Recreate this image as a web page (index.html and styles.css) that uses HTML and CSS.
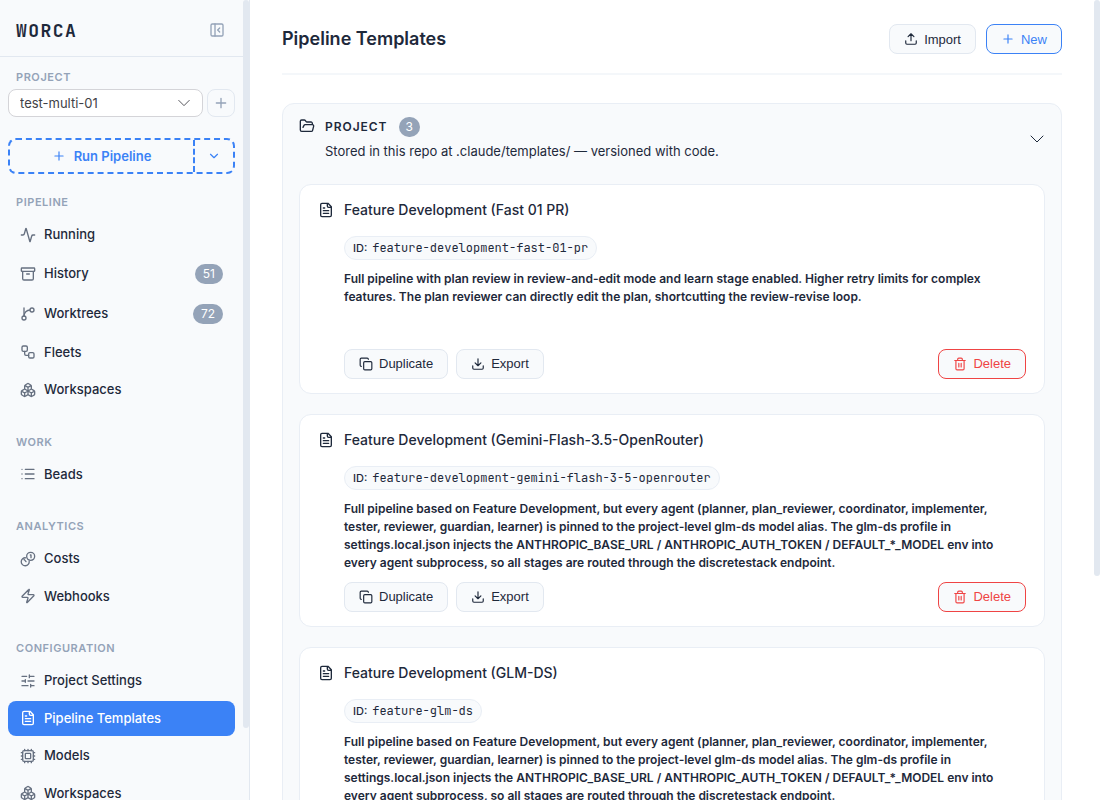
FILE: index.html
```html
<!DOCTYPE html>
<html lang="en">
<head>
    <meta charset="UTF-8">
    <meta name="viewport" content="width=device-width, initial-scale=1.0">
    <title>Worca - Pipeline Templates</title>
    <link rel="stylesheet" href="styles.css">
</head>
<body>

    <!-- Icon sprite -->
    <svg class="sprite" aria-hidden="true">
        <symbol id="i-panel" viewBox="0 0 24 24"><rect x="3" y="3" width="18" height="18" rx="2"/><path d="M9 3v18M16 15l-3-3 3-3"/></symbol>
        <symbol id="i-plus" viewBox="0 0 24 24"><path d="M5 12h14M12 5v14"/></symbol>
        <symbol id="i-chevron" viewBox="0 0 24 24"><path d="M6 9l6 6 6-6"/></symbol>
        <symbol id="i-chevron-wide" viewBox="0 0 16 16"><path d="M2 5l6 6 6-6"/></symbol>
        <symbol id="i-activity" viewBox="0 0 24 24"><path d="M22 12h-2.48a2 2 0 0 0-1.93 1.46l-2.35 8.36a.25.25 0 0 1-.48 0L9.24 2.18a.25.25 0 0 0-.48 0l-2.35 8.36A2 2 0 0 1 4.49 12H2"/></symbol>
        <symbol id="i-archive" viewBox="0 0 24 24"><rect x="2" y="3" width="20" height="5" rx="1"/><path d="M4 8v11a2 2 0 0 0 2 2h12a2 2 0 0 0 2-2V8M10 12h4"/></symbol>
        <symbol id="i-branch" viewBox="0 0 24 24"><path d="M6 3v12"/><circle cx="18" cy="6" r="3"/><circle cx="6" cy="18" r="3"/><path d="M15 6a9 9 0 0 0-9 9"/></symbol>
        <symbol id="i-workflow" viewBox="0 0 24 24"><rect x="3" y="3" width="8" height="8" rx="2"/><path d="M7 11v4a2 2 0 0 0 2 2h4"/><rect x="13" y="13" width="8" height="8" rx="2"/></symbol>
        <symbol id="i-boxes" viewBox="0 0 24 24"><path d="M2.97 12.92A2 2 0 0 0 2 14.63v3.24a2 2 0 0 0 .97 1.71l3 1.8a2 2 0 0 0 2.06 0L12 19v-5.5l-5-3-4.03 2.42ZM7 16.5l-4.74-2.85M7 16.5l5-3M7 16.5v5.17M12 13.5V19l3.97 2.38a2 2 0 0 0 2.06 0l3-1.8a2 2 0 0 0 .97-1.71v-3.24a2 2 0 0 0-.97-1.71L17 10.5l-5 3ZM17 16.5l-5-3M17 16.5l4.74-2.85M17 16.5v5.17M7.97 4.42A2 2 0 0 0 7 6.13v4.37l5 3 5-3V6.13a2 2 0 0 0-.97-1.71l-3-1.8a2 2 0 0 0-2.06 0l-3 1.8ZM12 8L7.26 5.15M12 8l4.74-2.85M12 13.5V8"/></symbol>
        <symbol id="i-list" viewBox="0 0 24 24"><path d="M3 5h.01M3 12h.01M3 19h.01M8 5h13M8 12h13M8 19h13"/></symbol>
        <symbol id="i-coins" viewBox="0 0 24 24"><circle cx="16" cy="8" r="6"/><path d="M8.5 10.2A6 6 0 1 0 13.8 15.5M15.5 6h1v4M6 13h.5l2.5 3"/></symbol>
        <symbol id="i-zap" viewBox="0 0 24 24"><path d="M4 14a1 1 0 0 1-.78-1.63l9.9-10.2a.5.5 0 0 1 .86.46l-1.92 6.02A1 1 0 0 0 13 10h7a1 1 0 0 1 .78 1.63l-9.9 10.2a.5.5 0 0 1-.86-.46l1.92-6.02A1 1 0 0 0 11 14z"/></symbol>
        <symbol id="i-sliders" viewBox="0 0 24 24"><path d="M10 5H3M12 19H3M14 3v4M16 17v4M21 12h-9M21 19h-5M21 5h-7M8 10v4M8 12H3"/></symbol>
        <symbol id="i-file" viewBox="0 0 24 24"><path d="M15 2H6a2 2 0 0 0-2 2v16a2 2 0 0 0 2 2h12a2 2 0 0 0 2-2V7ZM14 2v4a2 2 0 0 0 2 2h4M10 9H8M16 13H8M16 17H8"/></symbol>
        <symbol id="i-cpu" viewBox="0 0 24 24"><rect x="4" y="4" width="16" height="16" rx="2"/><rect x="8" y="8" width="8" height="8" rx="1"/><path d="M12 20v2M12 2v2M17 20v2M17 2v2M7 20v2M7 2v2M2 12h2M2 17h2M2 7h2M20 12h2M20 17h2M20 7h2"/></symbol>
        <symbol id="i-folder" viewBox="0 0 24 24"><path d="M6 14l1.5-2.9A2 2 0 0 1 9.24 10H20a2 2 0 0 1 1.94 2.5l-1.54 6a2 2 0 0 1-1.95 1.5H4a2 2 0 0 1-2-2V5a2 2 0 0 1 2-2h3.9a2 2 0 0 1 1.69.9l.81 1.2a2 2 0 0 0 1.67.9H18a2 2 0 0 1 2 2v2"/></symbol>
        <symbol id="i-upload" viewBox="0 0 24 24"><path d="M12 3v12M17 8l-5-5-5 5M21 15v4a2 2 0 0 1-2 2H5a2 2 0 0 1-2-2v-4"/></symbol>
        <symbol id="i-download" viewBox="0 0 24 24"><path d="M12 15V3M7 10l5 5 5-5M21 15v4a2 2 0 0 1-2 2H5a2 2 0 0 1-2-2v-4"/></symbol>
        <symbol id="i-copy" viewBox="0 0 24 24"><rect x="8" y="8" width="14" height="14" rx="2"/><path d="M4 16c-1.1 0-2-.9-2-2V4c0-1.1.9-2 2-2h10c1.1 0 2 .9 2 2"/></symbol>
        <symbol id="i-trash" viewBox="0 0 24 24"><path d="M10 11v6M14 11v6M19 6v14a2 2 0 0 1-2 2H7a2 2 0 0 1-2-2V6M3 6h18M8 6V4a2 2 0 0 1 2-2h4a2 2 0 0 1 2 2v2"/></symbol>
    </svg>

    <div class="app">
        <aside class="sidebar">
            <div class="sidebar-scroll">
                <div class="sidebar-header">
                    <span class="logo">WORCA</span>
                    <button class="collapse-btn" aria-label="Collapse sidebar"><svg class="icon"><use href="#i-panel"/></svg></button>
                </div>

                <div class="project-picker">
                    <label class="section-label" for="project">PROJECT</label>
                    <div class="project-row">
                        <div class="select-wrap">
                            <select id="project">
                                <option>test-multi-01</option>
                            </select>
                            <svg class="icon select-arrow"><use href="#i-chevron-wide"/></svg>
                        </div>
                        <button class="add-btn" aria-label="Add project"><svg class="icon"><use href="#i-plus"/></svg></button>
                    </div>
                </div>

                <div class="run-group">
                    <button class="run-btn"><svg class="icon"><use href="#i-plus"/></svg>Run Pipeline</button>
                    <button class="run-more" aria-label="More run options"><svg class="icon"><use href="#i-chevron"/></svg></button>
                </div>

                <nav>
                    <div class="nav-section">
                        <div class="section-label">PIPELINE</div>
                        <a class="nav-item" href="#running"><svg class="icon"><use href="#i-activity"/></svg>Running</a>
                        <a class="nav-item" href="#history"><svg class="icon"><use href="#i-archive"/></svg>History<span class="badge">51</span></a>
                        <a class="nav-item" href="#worktrees"><svg class="icon"><use href="#i-branch"/></svg>Worktrees<span class="badge">72</span></a>
                        <a class="nav-item" href="#fleets"><svg class="icon"><use href="#i-workflow"/></svg>Fleets</a>
                        <a class="nav-item" href="#workspaces"><svg class="icon"><use href="#i-boxes"/></svg>Workspaces</a>
                    </div>
                    <div class="nav-section">
                        <div class="section-label">WORK</div>
                        <a class="nav-item" href="#beads"><svg class="icon"><use href="#i-list"/></svg>Beads</a>
                    </div>
                    <div class="nav-section">
                        <div class="section-label">ANALYTICS</div>
                        <a class="nav-item" href="#costs"><svg class="icon"><use href="#i-coins"/></svg>Costs</a>
                        <a class="nav-item" href="#webhooks"><svg class="icon"><use href="#i-zap"/></svg>Webhooks</a>
                    </div>
                    <div class="nav-section">
                        <div class="section-label">CONFIGURATION</div>
                        <a class="nav-item" href="#settings"><svg class="icon"><use href="#i-sliders"/></svg>Project Settings</a>
                        <a class="nav-item active" href="#templates"><svg class="icon"><use href="#i-file"/></svg>Pipeline Templates</a>
                        <a class="nav-item" href="#models"><svg class="icon"><use href="#i-cpu"/></svg>Models</a>
                        <a class="nav-item" href="#config-workspaces"><svg class="icon"><use href="#i-boxes"/></svg>Workspaces</a>
                    </div>
                </nav>
            </div>
            <div class="scroll-track"><div class="scroll-thumb sidebar-thumb"></div></div>
        </aside>

        <main class="content">
            <div class="content-scroll">
                <header class="page-header">
                    <h1>Pipeline Templates</h1>
                    <div class="header-actions">
                        <button class="btn"><svg class="icon"><use href="#i-upload"/></svg>Import</button>
                        <button class="btn btn-primary"><svg class="icon"><use href="#i-plus"/></svg>New</button>
                    </div>
                </header>

                <section class="group">
                    <div class="group-header">
                        <svg class="icon"><use href="#i-folder"/></svg>
                        <div class="group-text">
                            <div class="group-title"><h2>PROJECT</h2><span class="badge">3</span></div>
                            <p>Stored in this repo at .claude/templates/ — versioned with code.</p>
                        </div>
                        <button class="toggle-btn" aria-label="Collapse group"><svg class="icon"><use href="#i-chevron-wide"/></svg></button>
                    </div>

                    <article class="card">
                        <svg class="icon"><use href="#i-file"/></svg>
                        <div class="card-body">
                            <h3>Feature Development (Fast 01 PR)</h3>
                            <div class="id-pill">ID: <code>feature-development-fast-01-pr</code></div>
                            <p>Full pipeline with plan review in review-and-edit mode and learn stage enabled. Higher retry limits for complex features. The plan reviewer can directly edit the plan, shortcutting the review-revise loop.</p>
                            <div class="card-actions">
                                <button class="btn"><svg class="icon"><use href="#i-copy"/></svg>Duplicate</button>
                                <button class="btn"><svg class="icon"><use href="#i-download"/></svg>Export</button>
                                <button class="btn btn-danger"><svg class="icon"><use href="#i-trash"/></svg>Delete</button>
                            </div>
                        </div>
                    </article>

                    <article class="card">
                        <svg class="icon"><use href="#i-file"/></svg>
                        <div class="card-body">
                            <h3>Feature Development (Gemini-Flash-3.5-OpenRouter)</h3>
                            <div class="id-pill">ID: <code>feature-development-gemini-flash-3-5-openrouter</code></div>
                            <p>Full pipeline based on Feature Development, but every agent (planner, plan_reviewer, coordinator, implementer, tester, reviewer, guardian, learner) is pinned to the project-level glm-ds model alias. The glm-ds profile in settings.local.json injects the ANTHROPIC_BASE_URL / ANTHROPIC_AUTH_TOKEN / DEFAULT_*_MODEL env into every agent subprocess, so all stages are routed through the discretestack endpoint.</p>
                            <div class="card-actions">
                                <button class="btn"><svg class="icon"><use href="#i-copy"/></svg>Duplicate</button>
                                <button class="btn"><svg class="icon"><use href="#i-download"/></svg>Export</button>
                                <button class="btn btn-danger"><svg class="icon"><use href="#i-trash"/></svg>Delete</button>
                            </div>
                        </div>
                    </article>

                    <article class="card">
                        <svg class="icon"><use href="#i-file"/></svg>
                        <div class="card-body">
                            <h3>Feature Development (GLM-DS)</h3>
                            <div class="id-pill">ID: <code>feature-glm-ds</code></div>
                            <p>Full pipeline based on Feature Development, but every agent (planner, plan_reviewer, coordinator, implementer, tester, reviewer, guardian, learner) is pinned to the project-level glm-ds model alias. The glm-ds profile in settings.local.json injects the ANTHROPIC_BASE_URL / ANTHROPIC_AUTH_TOKEN / DEFAULT_*_MODEL env into every agent subprocess, so all stages are routed through the discretestack endpoint.</p>
                            <div class="card-actions">
                                <button class="btn"><svg class="icon"><use href="#i-copy"/></svg>Duplicate</button>
                                <button class="btn"><svg class="icon"><use href="#i-download"/></svg>Export</button>
                                <button class="btn btn-danger"><svg class="icon"><use href="#i-trash"/></svg>Delete</button>
                            </div>
                        </div>
                    </article>
                </section>
            </div>
            <div class="scroll-track"><div class="scroll-thumb content-thumb"></div></div>
        </main>
    </div>

</body>
</html>
```

FILE: styles.css
```css
* {
    box-sizing: border-box;
}
body {
    margin: 0;
    font-family: Inter, sans-serif;
    font-size: 13px;
    line-height: 1.5;
    color: #1e293b;
    background-color: #fff;
}
h1, h2, h3, p {
    margin: 0;
}
button {
    padding: 0;
    background: none;
    border: none;
    cursor: pointer;
}
.sprite {
    display: none;
}
.icon {
    width: 16px;
    height: 16px;
    flex-shrink: 0;
    fill: none;
    stroke: currentColor;
    stroke-width: 2;
    stroke-linecap: round;
    stroke-linejoin: round;
}
.badge {
    padding: 0 7px;
    line-height: 20px;
    font-size: 12px;
    font-weight: 400;
    color: #fff;
    text-align: center;
    background-color: #94a3b8;
    border-radius: 10px;
}

.app {
    display: flex;
    height: 100vh;
}

/* Scroll panes with a slim thumb beside them */
.sidebar-scroll,
.content-scroll {
    flex: 1;
    min-width: 0;
    overflow-y: auto;
    scrollbar-width: none;
}
.scroll-track {
    width: 6px;
    flex-shrink: 0;
}
.scroll-thumb {
    background-color: #e2e8f0;
    border-radius: 3px;
}
.sidebar-thumb {
    height: 91%;
}
.content-thumb {
    height: 72%;
}

/* Sidebar */
.sidebar {
    display: flex;
    width: 250px;
    flex-shrink: 0;
    background-color: #f8fafc;
    border-right: 1px solid #e2e8f0;
}
.sidebar-header {
    display: flex;
    align-items: center;
    justify-content: space-between;
    height: 57px;
    padding: 4px 18px 0 16px;
    border-bottom: 1px solid #e2e8f0;
}
.logo {
    font-family: "JetBrains Mono", "DejaVu Sans Mono", monospace;
    font-size: 18px;
    font-weight: 600;
    letter-spacing: 0.08em;
}
.collapse-btn {
    display: flex;
    color: #94a3b8;
}
.section-label {
    display: block;
    padding: 0 8px;
    font-size: 11px;
    line-height: 16px;
    font-weight: 600;
    letter-spacing: 0.05em;
    color: #94a3b8;
}
.project-picker {
    padding: 12px 8px 0;
}
.project-row {
    display: flex;
    gap: 4px;
    margin-top: 4px;
}
.select-wrap {
    position: relative;
    flex: 1;
}
.select-wrap select {
    width: 100%;
    height: 28px;
    padding: 0 11px;
    appearance: none;
    font-family: inherit;
    font-size: 13px;
    color: #3f3f46;
    background-color: #fff;
    border: 1px solid #d4d4d8;
    border-radius: 8px;
}
.select-arrow {
    position: absolute;
    top: 7px;
    right: 12px;
    width: 14px;
    height: 14px;
    stroke-width: 1;
    color: #3f3f46;
    pointer-events: none;
}
.add-btn {
    display: flex;
    align-items: center;
    justify-content: center;
    width: 28px;
    height: 28px;
    color: #94a3b8;
    border: 1px solid #e2e8f0;
    border-radius: 8px;
}
.run-group {
    display: flex;
    margin: 21px 8px 20px;
    height: 36px;
    border: 2px dashed #3b82f6;
    border-radius: 8px;
}
.run-btn,
.run-more {
    display: flex;
    align-items: center;
    justify-content: center;
    color: #3b82f6;
}
.run-btn {
    flex: 1;
    gap: 8px;
    font-family: inherit;
    font-size: 13px;
    font-weight: 600;
}
.run-more {
    width: 40px;
    border-left: 2px dashed #3b82f6;
}
.run-group .icon {
    width: 14px;
    height: 14px;
}
.nav-section {
    padding: 0 8px;
    margin-bottom: 26px;
}
.nav-section .section-label {
    margin-bottom: 7px;
}
.nav-item {
    display: flex;
    align-items: center;
    gap: 8px;
    padding: 8px 12px;
    margin-bottom: 2px;
    font-weight: 500;
    color: #1e293b;
    text-decoration: none;
    border-radius: 8px;
}
.nav-item .icon {
    color: #667080;
}
.nav-item .badge {
    margin: 1px 0 1px auto;
    padding: 0 8px;
}
.nav-item.active {
    color: #fff;
    background-color: #3b82f6;
}
.nav-item.active .icon {
    color: #fff;
}

/* Page */
.content {
    display: flex;
    flex: 1;
    min-width: 0;
}
.content-scroll {
    padding: 24px 32px;
}
.page-header {
    display: flex;
    align-items: flex-start;
    justify-content: space-between;
    padding-bottom: 19px;
    margin-bottom: 28px;
    border-bottom: 2px solid #f4f7fa;
}
.page-header h1 {
    font-size: 18px;
    font-weight: 600;
    line-height: 29px;
}
.header-actions {
    display: flex;
    gap: 10px;
}
.btn {
    display: flex;
    align-items: center;
    gap: 6px;
    height: 30px;
    padding: 0 14px;
    font-family: "Liberation Sans", Arial, sans-serif;
    font-size: 13px;
    color: #1e293b;
    background-color: #f8fafc;
    border: 1px solid #e2e8f0;
    border-radius: 8px;
}
.btn .icon {
    width: 14px;
    height: 14px;
}
.btn-primary {
    color: #3b82f6;
    border-color: #3b82f6;
}
.btn-danger {
    margin-left: auto;
    color: #ef4444;
    border-color: #ef4444;
}

/* Template group */
.group {
    display: flex;
    flex-direction: column;
    gap: 20px;
    padding: 13px 16px 16px;
    background-color: #f8fafc;
    border: 1px solid #e9eef5;
    border-radius: 12px;
}
.group-header {
    display: flex;
    gap: 10px;
    margin-bottom: 2px;
}
.group-header > .icon {
    margin-top: 1px;
}
.group-text {
    flex: 1;
}
.group-title {
    display: flex;
    align-items: center;
    gap: 11px;
    margin-bottom: 5px;
}
.group-title h2 {
    font-size: 12px;
    font-weight: 600;
    letter-spacing: 0.08em;
}
.toggle-btn {
    display: flex;
    align-items: center;
    color: #1e293b;
}
.toggle-btn .icon {
    stroke-width: 1;
}

/* Template card */
.card {
    display: flex;
    gap: 10px;
    min-height: 210px;
    padding: 14px 18px;
    background-color: #fff;
    border: 1px solid #e9eef5;
    border-radius: 12px;
}
.card > .icon {
    margin-top: 3px;
}
.card-body {
    display: flex;
    flex: 1;
    flex-direction: column;
    align-items: flex-start;
}
.card h3 {
    font-size: 14px;
    font-weight: 500;
    line-height: 22px;
}
.id-pill {
    margin: 15px 0 10px;
    padding: 0 8px;
    font-size: 11px;
    font-weight: 500;
    line-height: 22px;
    background-color: #f8fafc;
    border: 1px solid #e9eef5;
    border-radius: 12px;
}
.id-pill code {
    margin-left: 2px;
    font-family: "JetBrains Mono", "DejaVu Sans Mono", monospace;
    font-size: 12px;
    font-weight: 400;
}
.card p {
    font-size: 12px;
    font-weight: 600;
    line-height: 18px;
}
.card-actions {
    display: flex;
    gap: 8px;
    width: 100%;
    margin-top: auto;
    padding-top: 10px;
}
```
